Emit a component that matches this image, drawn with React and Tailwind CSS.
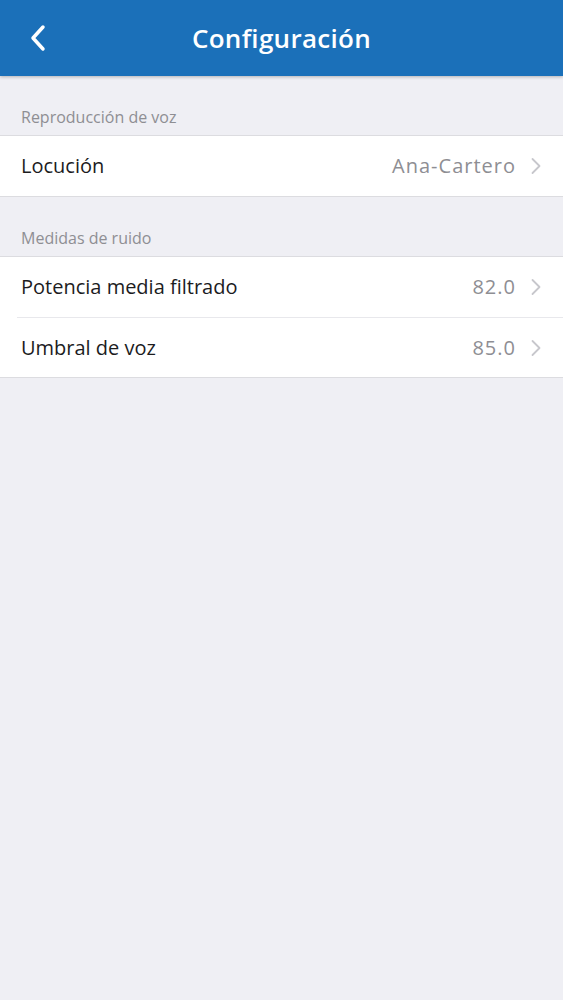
// App.jsx — Settings screen with grouped rows

const sections = [
  {
    title: "Reproducción de voz",
    rows: [{ label: "Locución", value: "Ana-Cartero" }],
  },
  {
    title: "Medidas de ruido",
    rows: [
      { label: "Potencia media filtrado", value: "82.0" },
      { label: "Umbral de voz", value: "85.0" },
    ],
  },
];

const Chevron = () => (
  <svg width="12" height="18" viewBox="0 0 12 18" fill="none" className="ml-[14px] mr-[21px]">
    <path d="M2.5 2l7 7-7 7" stroke="#c7c7cc" strokeWidth="1.8" strokeLinecap="round" strokeLinejoin="round" />
  </svg>
);

const App = () => {
  return (
    <div className="min-h-[1000px] bg-[#efeff4] font-['Open_Sans','Liberation_Sans',sans-serif]">
      {/* Nav bar */}
      <div className="relative h-[76px] bg-[#1b70b9] flex items-center justify-center shadow-[0_1px_3px_rgba(0,0,0,0.25)]">
        <button className="absolute left-[28px] top-[24px]">
          <svg width="22" height="28" viewBox="0 0 22 28" fill="none">
            <path d="M15 3L5 14l10 11" stroke="white" strokeWidth="3.5" strokeLinecap="round" strokeLinejoin="round" />
          </svg>
        </button>
        <h1 className="text-white text-[26px] font-semibold tracking-[0.3px]">Configuración</h1>
      </div>

      {sections.map((section) => (
        <div key={section.title}>
          <div className="pl-[21px] pt-[29px] pb-[6px] text-[16px] leading-[24px] text-[#8e8e93]">
            {section.title}
          </div>
          <div className="bg-white border-y border-[#dcdce0]">
            {section.rows.map((row, i) => (
              <div key={row.label} className="pl-[21px]">
                <div
                  className={`h-[60px] flex items-center ${i > 0 ? "border-t border-[#e8e8ec] -ml-[4px] pl-[4px]" : ""}`}
                >
                  <span className="flex-1 text-[20px] text-[#1c1c1e]">{row.label}</span>
                  <span className="text-[20px] text-[#8e8e93] tracking-[1px]">{row.value}</span>
                  <Chevron />
                </div>
              </div>
            ))}
          </div>
        </div>
      ))}
    </div>
  );
};

export default App;
